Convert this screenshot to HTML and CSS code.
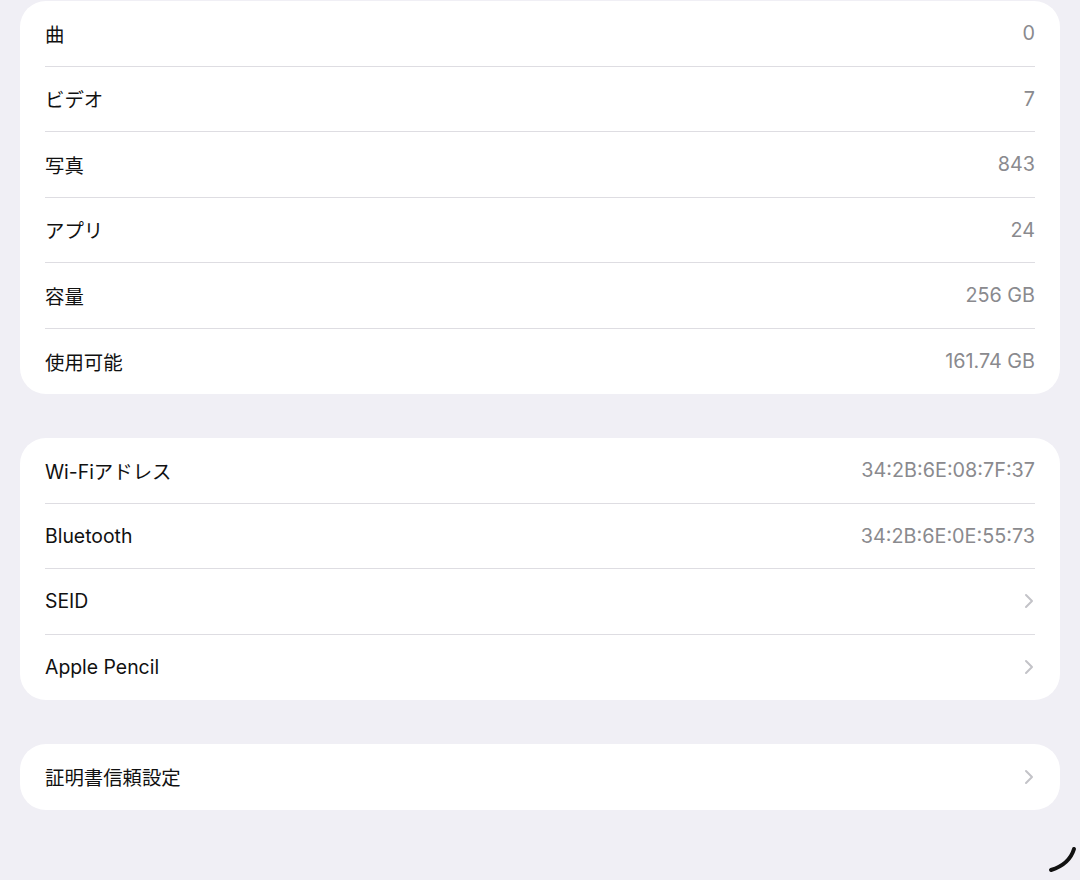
FILE: index.html
```html
<!DOCTYPE html>
<html lang="ja">

<head>
    <meta charset="UTF-8">
    <title>情報</title>
    <link rel="stylesheet" href="styles.css">
</head>

<body>

    <main class="settings">
        <!-- Counts & storage -->
        <section class="group">
            <div class="row"><span class="label">曲</span><span class="value">0</span></div>
            <div class="row"><span class="label">ビデオ</span><span class="value">7</span></div>
            <div class="row"><span class="label">写真</span><span class="value">843</span></div>
            <div class="row"><span class="label">アプリ</span><span class="value">24</span></div>
            <div class="row"><span class="label">容量</span><span class="value">256 GB</span></div>
            <div class="row"><span class="label">使用可能</span><span class="value">161.74 GB</span></div>
        </section>

        <!-- Network -->
        <section class="group">
            <div class="row"><span class="label">Wi-Fiアドレス</span><span class="value">34:2B:6E:08:7F:37</span></div>
            <div class="row"><span class="label">Bluetooth</span><span class="value">34:2B:6E:0E:55:73</span></div>
            <div class="row">
                <span class="label">SEID</span>
                <svg class="chevron" viewBox="0 0 10 16"><path d="M2 2l6 6-6 6" /></svg>
            </div>
            <div class="row">
                <span class="label">Apple Pencil</span>
                <svg class="chevron" viewBox="0 0 10 16"><path d="M2 2l6 6-6 6" /></svg>
            </div>
        </section>

        <section class="group">
            <div class="row">
                <span class="label">証明書信頼設定</span>
                <svg class="chevron" viewBox="0 0 10 16"><path d="M2 2l6 6-6 6" /></svg>
            </div>
        </section>
    </main>

    <!-- pencil hover stroke -->
    <svg class="pencil-mark" viewBox="0 0 40 40">
        <path d="M34 7 C31 17 24 24 11 28" />
    </svg>

</body>

</html>
```

FILE: styles.css
```css
* {
    box-sizing: border-box;
    margin: 0;
    padding: 0;
}

body {
    background-color: #f0eff5;
    font-family: Inter, "Noto Sans CJK JP", sans-serif;
    color: #111111;
    width: 1080px;
    height: 880px;
    overflow: hidden;
    position: relative;
}

.settings {
    display: flex;
    flex-direction: column;
    gap: 44px;
    padding: 1px 20px 0 20px;
}

.group {
    background-color: #ffffff;
    border-radius: 26px;
    padding: 0 25px;
}

.row {
    display: flex;
    align-items: center;
    justify-content: space-between;
    height: 65.5px;
    border-bottom: 1px solid #dedde2;
}

.row:last-child {
    border-bottom: none;
}

.label {
    font-size: 19.4px;
    color: #111111;
}

.value {
    font-size: 19.8px;
    color: #8a8a8e;
}

.chevron {
    width: 10px;
    height: 16px;
    margin-right: 1px;
}

.chevron path {
    fill: none;
    stroke: #c3c3c8;
    stroke-width: 2;
    stroke-linecap: round;
    stroke-linejoin: round;
}

.pencil-mark {
    position: absolute;
    left: 1040px;
    top: 842px;
    width: 40px;
    height: 40px;
}

.pencil-mark path {
    fill: none;
    stroke: #111111;
    stroke-width: 4;
    stroke-linecap: round;
}
```
